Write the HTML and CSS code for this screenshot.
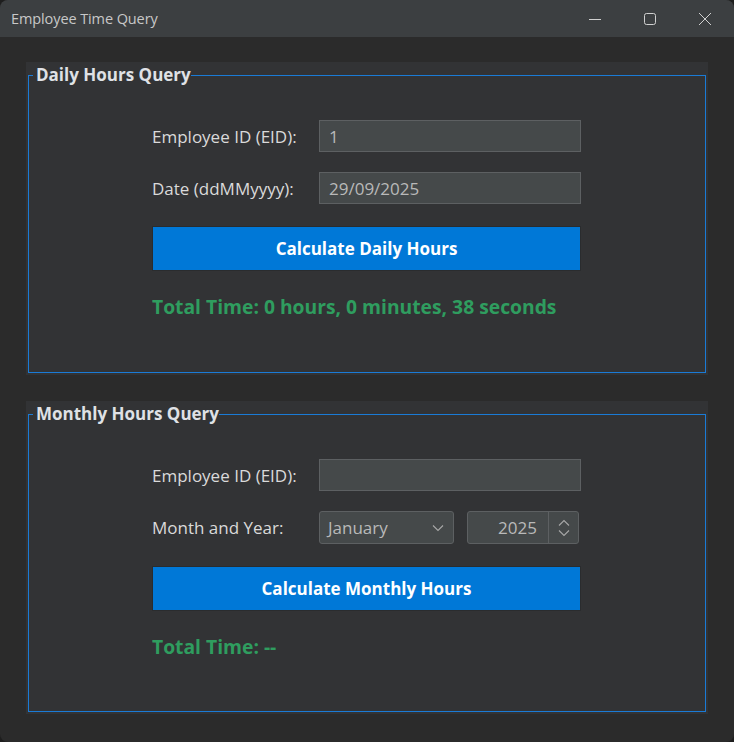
FILE: index.html
```html
<!DOCTYPE html>
<html>
<head>
<meta charset="utf-8">
<title>Employee Time Query</title>
<link rel="stylesheet" href="styles.css">
</head>
<body>
<div class="window">
  <header class="titlebar">
    <span class="title">Employee Time Query</span>
    <div class="controls">
      <span class="ctl"><svg width="14" height="14" viewBox="0 0 14 14"><path d="M1 7.5h12" stroke="#d0d0d0" stroke-width="1" fill="none"/></svg></span>
      <span class="ctl"><svg width="14" height="14" viewBox="0 0 14 14"><rect x="1.5" y="1.5" width="11" height="11" rx="2" stroke="#d0d0d0" stroke-width="1" fill="none"/></svg></span>
      <span class="ctl"><svg width="14" height="14" viewBox="0 0 14 14"><path d="M1 1L13 13M13 1L1 13" stroke="#d0d0d0" stroke-width="1" fill="none"/></svg></span>
    </div>
  </header>
  <main class="content">
    <section class="panel">
      <fieldset class="group">
        <legend>Daily Hours Query</legend>
        <div class="form">
          <span class="label">Employee ID (EID):</span>
          <div class="field">1</div>
          <span class="label">Date (ddMMyyyy):</span>
          <div class="field">29/09/2025</div>
          <div class="action">Calculate Daily Hours</div>
          <div class="result">Total Time: 0 hours, 0 minutes, 38 seconds</div>
        </div>
      </fieldset>
    </section>
    <section class="panel">
      <fieldset class="group">
        <legend>Monthly Hours Query</legend>
        <div class="form">
          <span class="label">Employee ID (EID):</span>
          <div class="field"></div>
          <span class="label">Month and Year:</span>
          <div class="pickers">
            <div class="combo">
              <span>January</span>
              <svg width="12" height="8" viewBox="0 0 12 8"><path d="M1 1.5l5 5 5-5" stroke="#a8a8a8" stroke-width="1.1" fill="none"/></svg>
            </div>
            <div class="spinner">
              <span class="spin-value">2025</span>
              <span class="spin-arrows">
                <svg width="12" height="18" viewBox="0 0 12 18"><path d="M1 6.5l5-5 5 5M1 11.5l5 5 5-5" stroke="#a8a8a8" stroke-width="1.1" fill="none"/></svg>
              </span>
            </div>
          </div>
          <div class="action">Calculate Monthly Hours</div>
          <div class="result">Total Time: --</div>
        </div>
      </fieldset>
    </section>
  </main>
</div>
</body>
</html>
```

FILE: styles.css
```css
html, body {
  margin: 0;
  padding: 0;
  background: #1e1e1e;
}
body {
  width: 734px;
  height: 742px;
  overflow: hidden;
  font-family: "Open Sans", "Noto Sans", sans-serif;
}
.window {
  width: 734px;
  height: 742px;
  box-sizing: border-box;
  background: #2b2b2b;
  border-radius: 8px;
  overflow: hidden;
  display: flex;
  flex-direction: column;
}
.titlebar {
  height: 37px;
  flex: none;
  background: #3c3f41;
  display: flex;
  align-items: center;
  justify-content: space-between;
}
.title {
  margin-left: 11px;
  font-size: 14.5px;
  color: #c8c8c8;
  letter-spacing: -0.1px;
}
.controls {
  display: flex;
  margin-right: 2px;
  height: 37px;
}
.ctl {
  width: 55px;
  height: 37px;
  display: flex;
  align-items: center;
  justify-content: center;
}
.content {
  flex: 1;
  padding: 25px 26px 27px 26px;
  display: flex;
  flex-direction: column;
  gap: 26px;
}
.panel {
  background: #323335;
  padding: 3px 2px 2px 2px;
  height: 313px;
  box-sizing: border-box;
  display: flex;
}
.group {
  flex: 1;
  margin: 0;
  padding: 0;
  border: 1px solid #1a7bd6;
  min-width: 0;
}
.group legend {
  margin-left: 4px;
  padding: 0 0 0 3px;
  font-weight: 700;
  font-size: 17px;
  line-height: 20px;
  color: #dfe1e5;
}
.form {
  width: 429px;
  margin: 35px 0 0 123px;
  display: grid;
  grid-template-columns: 167px 262px;
  row-gap: 20px;
  align-items: center;
  font-size: 17px;
}
.label {
  color: #dadada;
}
.field {
  height: 32px;
  box-sizing: border-box;
  background: #45494a;
  border: 1px solid #5d6062;
  color: #b9b9b9;
  padding: 0 9px;
  display: flex;
  align-items: center;
}
.pickers {
  display: flex;
  gap: 13px;
}
.combo {
  width: 135px;
  height: 33px;
  box-sizing: border-box;
  background: #45494a;
  border: 1px solid #5d6062;
  border-radius: 3px;
  color: #b9b9b9;
  padding: 0 9px 0 8px;
  display: flex;
  align-items: center;
  justify-content: space-between;
}
.spinner {
  width: 112px;
  height: 33px;
  box-sizing: border-box;
  background: #45494a;
  border: 1px solid #5d6062;
  border-radius: 3px;
  color: #b9b9b9;
  display: flex;
}
.spin-value {
  flex: 1;
  display: flex;
  align-items: center;
  justify-content: flex-end;
  padding-right: 11px;
  border-right: 1px solid #5d6062;
}
.spin-arrows {
  width: 29px;
  display: flex;
  align-items: center;
  justify-content: center;
}
.action {
  grid-column: 1 / 3;
  margin-top: 2px;
  height: 45px;
  box-sizing: border-box;
  background: #0078d7;
  border: 1px solid #2a2c2e;
  color: #ffffff;
  font-weight: 700;
  font-size: 17px;
  display: flex;
  align-items: center;
  justify-content: center;
}
.result {
  grid-column: 1 / 3;
  margin-top: 4px;
  font-weight: 700;
  font-size: 19.3px;
  line-height: 24px;
  color: #2f9d5f;
}
```
